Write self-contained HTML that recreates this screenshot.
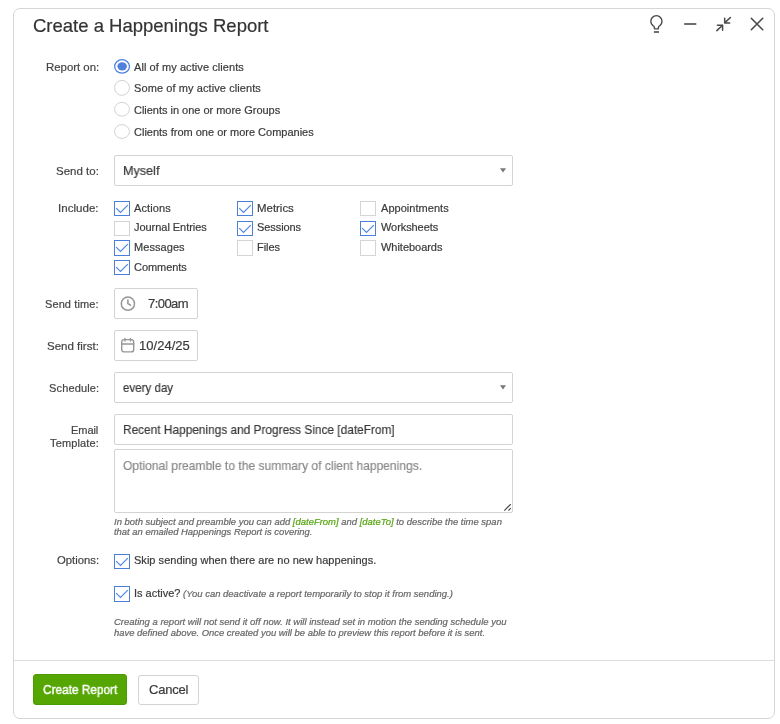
<!DOCTYPE html>
<html lang="en">
<head>
<meta charset="utf-8">
<title>Create a Happenings Report</title>
<style>
*{box-sizing:border-box;margin:0;padding:0}
html,body{width:780px;height:724px;background:#fff;overflow:hidden}
body{font-family:"Liberation Sans",sans-serif;color:#3a3a3a;position:relative;font-size:11px}
.dlg{position:absolute;left:13px;top:8px;width:762px;height:711px;border:1px solid #d6d6d6;border-radius:7px;background:#fff}
.abs{position:absolute;white-space:nowrap}
.t{position:absolute;white-space:nowrap;transform-origin:0 50%;color:#3a3a3a;will-change:transform;-webkit-text-stroke:0.2px}
.box{border:1px solid #d3d3d3;border-radius:2px;background:#fff}
.cb{width:16px;height:15px;border:1px solid #d4d4d4;background:#fff}
.cb.on{border-color:#4a80dc}
.cb svg{position:absolute;left:-1px;top:-1px}
.g{color:#55a30e}
.btn{height:31px;border-radius:2px}
</style>
</head>
<body>
<div class="dlg"></div>

<!-- header icons -->
<svg class="abs" style="left:640px;top:8px" width="135" height="36" viewBox="0 0 135 36" fill="none" stroke="#4a4a4a" stroke-width="1.4" stroke-linecap="round" stroke-linejoin="round">
  <path d="M14.400 20.850V19.300Q14.400 18.500 12.900 17.600A5.600 5.600 0 1 1 19.900 17.600Q18.400 18.500 18.400 19.300V20.850Z" stroke-width="1.4"/>
  <path d="M13.900 24h5.100" stroke-width="1.600" stroke-linecap="butt"/>
  <path d="M44.200 16h12.100" stroke-width="1.600" stroke-linecap="butt"/>
  <path d="M90.400 9.500L84.700 14.900M84.700 10.200V14.900H89.700" stroke-width="1.5"/>
  <path d="M76.800 22.600L82.600 17.300M82.600 22.300V17.300H77.400" stroke-width="1.5"/>
  <path d="M111.300 10.300l11.400 11.400m0-11.400l-11.400 11.400" stroke-width="1.600"/>
</svg>

<!-- radios -->
<svg class="abs" style="left:114px;top:59px" width="16" height="82" viewBox="0 0 16 82">
  <ellipse cx="8.050" cy="7.450" rx="7.400" ry="6.750" fill="#fff" stroke="#4a80e0" stroke-width="1.250"/>
  <ellipse cx="8.150" cy="7.350" rx="4.750" ry="4.050" fill="#4f80db"/>
  <ellipse cx="8" cy="28.850" rx="7.450" ry="7.450" fill="#fff" stroke="#d2d2d2"/>
  <ellipse cx="8" cy="50.250" rx="7.450" ry="6.900" fill="#fff" stroke="#d2d2d2"/>
  <ellipse cx="8" cy="72.500" rx="7.450" ry="6.900" fill="#fff" stroke="#d2d2d2"/>
</svg>

<!-- Send to -->
<div class="abs box" style="left:114px;top:155px;width:399px;height:31px"></div>
<svg class="abs" style="left:499px;top:167px" width="8" height="7" viewBox="0 0 8 7"><path d="M1 1.200h6l-3 4.200z" fill="#777"/></svg>

<!-- Include checkboxes -->
<div class="abs cb on" style="left:114px;top:201px"><svg width="16" height="15"><path d="M2.200 7.200l4.300 4.300 7.300-7.300" fill="none" stroke="#4f86e3" stroke-width="1.200"/></svg></div>
<div class="abs cb" style="left:114px;top:221px"></div>
<div class="abs cb on" style="left:114px;top:240px;height:16px"><svg width="16" height="15"><path d="M2.200 7.200l4.300 4.300 7.300-7.300" fill="none" stroke="#4f86e3" stroke-width="1.200"/></svg></div>
<div class="abs cb on" style="left:114px;top:260px"><svg width="16" height="15"><path d="M2.200 7.200l4.300 4.300 7.300-7.300" fill="none" stroke="#4f86e3" stroke-width="1.200"/></svg></div>
<div class="abs cb on" style="left:237px;top:201px"><svg width="16" height="15"><path d="M2.200 7.200l4.300 4.300 7.300-7.300" fill="none" stroke="#4f86e3" stroke-width="1.200"/></svg></div>
<div class="abs cb on" style="left:237px;top:221px"><svg width="16" height="15"><path d="M2.200 7.200l4.300 4.300 7.300-7.300" fill="none" stroke="#4f86e3" stroke-width="1.200"/></svg></div>
<div class="abs cb" style="left:237px;top:240px;height:16px"></div>
<div class="abs cb" style="left:360px;top:201px"></div>
<div class="abs cb on" style="left:360px;top:221px"><svg width="16" height="15"><path d="M2.200 7.200l4.300 4.300 7.300-7.300" fill="none" stroke="#4f86e3" stroke-width="1.200"/></svg></div>
<div class="abs cb" style="left:360px;top:240px;height:16px"></div>

<!-- Send time -->
<div class="abs box" style="left:114px;top:288px;width:84px;height:31px"></div>
<svg class="abs" style="left:120px;top:296px" width="16" height="16" viewBox="0 0 16 16" fill="none" stroke="#979797" stroke-width="1.4" stroke-linecap="round" stroke-linejoin="round"><circle cx="7.900" cy="7.700" r="6.600" stroke-width="1.500"/><path d="M7.900 4.100V7.500L10.600 9.100" stroke-width="1.600"/></svg>

<!-- Send first -->
<div class="abs box" style="left:114px;top:330px;width:84px;height:31px"></div>
<svg class="abs" style="left:120px;top:337px" width="16" height="17" viewBox="0 0 16 17" fill="none" stroke="#979797" stroke-width="1.4" stroke-linecap="round" stroke-linejoin="round"><rect x="1.700" y="2.600" width="12" height="12.300" rx="2.500"/><path d="M1.700 6.900H13.700" stroke-width="1.500"/><path d="M4.950 1.500V4.100M10.500 1.500V4.100"/></svg>

<!-- Schedule -->
<div class="abs box" style="left:114px;top:372px;width:399px;height:31px"></div>
<svg class="abs" style="left:499px;top:384px" width="8" height="7" viewBox="0 0 8 7"><path d="M1 1.200h6l-3 4.200z" fill="#777"/></svg>

<!-- Email template -->
<div class="abs box" style="left:114px;top:414px;width:399px;height:31px"></div>
<div class="abs box" style="left:114px;top:449px;width:399px;height:64px"></div>
<svg class="abs" style="left:502px;top:501px" width="10" height="11" viewBox="0 0 10 11" stroke="#444" stroke-width="1.100" fill="none"><path d="M2.300 9.600L8.800 3.100M6.400 9.600L8.800 7.200"/></svg>

<!-- Options -->
<div class="abs cb on" style="left:114px;top:554px"><svg width="16" height="15"><path d="M2.200 7.200l4.300 4.300 7.300-7.300" fill="none" stroke="#4f86e3" stroke-width="1.200"/></svg></div>
<div class="abs cb on" style="left:114px;top:586px;height:16px"><svg width="16" height="15"><path d="M2.200 7.200l4.300 4.300 7.300-7.300" fill="none" stroke="#4f86e3" stroke-width="1.200"/></svg></div>

<!-- footer -->
<div class="abs" style="left:14px;top:660px;width:760px;height:1px;background:#dedede"></div>
<div class="abs btn" style="left:33px;top:674px;width:94px;background:#55a602;border:1px solid #4b9b03;border-radius:3px"></div>
<div class="abs btn" style="left:138px;top:675px;width:61px;height:30px;background:#fff;border:1px solid #d3d3d3;border-radius:3px"></div>

<div id="t_title" class="t" style="left:33px;top:13.59px;font-size:18.5px;line-height:24px;letter-spacing:0px;color:#333">Create a Happenings Report</div>
<div id="l_rep" class="t" style="left:46px;top:59.69px;font-size:11px;line-height:14px;transform:scaleX(1.0357);color:#444">Report on:</div>
<div id="r1" class="t" style="left:134px;top:59.69px;font-size:11px;line-height:14px;letter-spacing:0.07px">All of my active clients</div>
<div id="r2" class="t" style="left:134px;top:80.99px;font-size:11px;line-height:14px;letter-spacing:0.09px">Some of my active clients</div>
<div id="r3" class="t" style="left:134px;top:102.69px;font-size:11px;line-height:14px;letter-spacing:-0.02px">Clients in one or more Groups</div>
<div id="r4" class="t" style="left:134px;top:124.69px;font-size:11px;line-height:14px;letter-spacing:-0px">Clients from one or more Companies</div>
<div id="l_send" class="t" style="left:56px;top:163.99px;font-size:11px;line-height:14px;transform:scaleX(1.0451);color:#444">Send to:</div>
<div id="v_my" class="t" style="left:123px;top:161.8px;font-size:13px;line-height:17px;transform:scaleX(0.9719)">Myself</div>
<div id="l_inc" class="t" style="left:58px;top:201.19px;font-size:11px;line-height:14px;transform:scaleX(1.0526);color:#444">Include:</div>
<div id="c11" class="t" style="left:134px;top:201.19px;font-size:11px;line-height:14px;letter-spacing:0.11px">Actions</div>
<div id="c12" class="t" style="left:134px;top:220.39px;font-size:11px;line-height:14px;letter-spacing:-0.04px">Journal Entries</div>
<div id="c13" class="t" style="left:134px;top:240.19px;font-size:11px;line-height:14px;letter-spacing:0.06px">Messages</div>
<div id="c14" class="t" style="left:134px;top:259.89px;font-size:11px;line-height:14px;letter-spacing:-0.05px">Comments</div>
<div id="c21" class="t" style="left:257px;top:201.19px;font-size:11px;line-height:14px;transform:scaleX(1.0389)">Metrics</div>
<div id="c22" class="t" style="left:257px;top:220.39px;font-size:11px;line-height:14px;letter-spacing:-0.08px">Sessions</div>
<div id="c23" class="t" style="left:257px;top:240.19px;font-size:11px;line-height:14px;letter-spacing:-0.04px">Files</div>
<div id="c31" class="t" style="left:381px;top:201.19px;font-size:11px;line-height:14px;letter-spacing:0.04px">Appointments</div>
<div id="c32" class="t" style="left:381px;top:220.39px;font-size:11px;line-height:14px;letter-spacing:-0.08px">Worksheets</div>
<div id="c33" class="t" style="left:381px;top:240.19px;font-size:11px;line-height:14px;letter-spacing:-0.03px">Whiteboards</div>
<div id="l_time" class="t" style="left:45px;top:297.39px;font-size:11px;line-height:14px;letter-spacing:0.1px;color:#444">Send time:</div>
<div id="v_time" class="t" style="left:148px;top:295.2px;font-size:13px;line-height:17px;letter-spacing:-0.56px">7:00am</div>
<div id="l_first" class="t" style="left:47px;top:339.19px;font-size:11px;line-height:14px;transform:scaleX(1.0468);color:#444">Send first:</div>
<div id="v_first" class="t" style="left:139px;top:337px;font-size:13px;line-height:17px;letter-spacing:0.02px">10/24/25</div>
<div id="l_sch" class="t" style="left:49px;top:381.19px;font-size:11px;line-height:14px;letter-spacing:0.15px;color:#444">Schedule:</div>
<div id="v_sch" class="t" style="left:123px;top:379px;font-size:13px;line-height:17px;transform:scaleX(0.8882)">every day</div>
<div id="l_em1" class="t" style="left:71px;top:423.19px;font-size:11px;line-height:14px;letter-spacing:-0.06px;color:#444">Email</div>
<div id="l_em2" class="t" style="left:50px;top:436.19px;font-size:11px;line-height:14px;letter-spacing:0.15px;color:#444">Template:</div>
<div id="v_subj" class="t" style="left:123px;top:421px;font-size:13px;line-height:17px;transform:scaleX(0.9126)">Recent Happenings and Progress Since [dateFrom]</div>
<div id="v_ph" class="t" style="left:123px;top:457.3px;font-size:13px;line-height:17px;transform:scaleX(0.928);color:#8a8a8a">Optional preamble to the summary of client happenings.</div>
<div id="h1" class="t" style="left:114px;top:515.88px;font-size:9px;line-height:12px;transform:scaleX(1.0514);font-style:italic;color:#666">In both subject and preamble you can add <span class="g">[dateFrom]</span> and <span class="g">[dateTo]</span> to describe the time span</div>
<div id="h2" class="t" style="left:114px;top:526.18px;font-size:9px;line-height:12px;transform:scaleX(1.0467);font-style:italic;color:#666">that an emailed Happenings Report is covering.</div>
<div id="l_opt" class="t" style="left:57px;top:553.49px;font-size:11px;line-height:14px;transform:scaleX(1.0263);color:#444">Options:</div>
<div id="o1" class="t" style="left:134px;top:553.49px;font-size:11px;line-height:14px;letter-spacing:0.03px">Skip sending when there are no new happenings.</div>
<div id="o2" class="t" style="left:134px;top:586.49px;font-size:11px;line-height:14px;letter-spacing:-0.01px">Is active?</div>
<div id="o2h" class="t" style="left:183px;top:588.18px;font-size:9px;line-height:12px;transform:scaleX(1.0536);font-style:italic;color:#666">(You can deactivate a report temporarily to stop it from sending.)</div>
<div id="n1" class="t" style="left:114px;top:615.88px;font-size:9px;line-height:12px;transform:scaleX(1.0544);font-style:italic;color:#666">Creating a report will not send it off now. It will instead set in motion the sending schedule you</div>
<div id="n2" class="t" style="left:114px;top:627.18px;font-size:9px;line-height:12px;transform:scaleX(1.0489);font-style:italic;color:#666">have defined above. Once created you will be able to preview this report before it is sent.</div>
<div id="b_create" class="t" style="left:43px;top:681.3px;font-size:13px;line-height:17px;transform:scaleX(0.9095);color:#fff;-webkit-text-stroke:0.4px #fff">Create Report</div>
<div id="b_cancel" class="t" style="left:149px;top:681.3px;font-size:13px;line-height:17px;letter-spacing:-0.24px">Cancel</div>

</body>
</html>
